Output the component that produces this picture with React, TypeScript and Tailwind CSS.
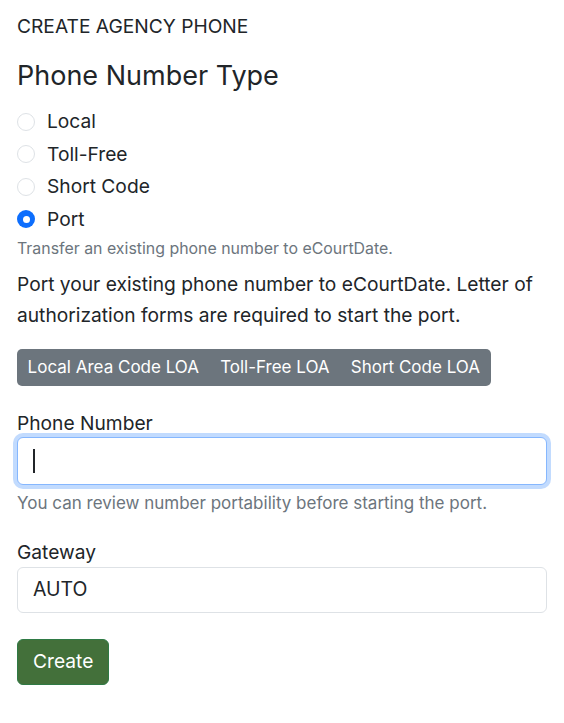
import React from "react";

const font = "[font-family:Inter,'Liberation_Sans',Arial,sans-serif]";

const phoneTypes = [
  { label: "Local", checked: false },
  { label: "Toll-Free", checked: false },
  { label: "Short Code", checked: false },
  { label: "Port", checked: true },
];

const loaForms = ["Local Area Code LOA", "Toll-Free LOA", "Short Code LOA"];

function Radio({ label, checked }: { label: string; checked: boolean }) {
  return (
    <label className="flex h-[32.5px] items-center gap-[12px]">
      {checked ? (
        <span className="flex h-[18px] w-[18px] items-center justify-center rounded-full bg-[#0d6efd]">
          <span className="h-[7px] w-[7px] rounded-full bg-white" />
        </span>
      ) : (
        <span className="h-[18px] w-[18px] rounded-full border border-[#dee2e6] bg-white" />
      )}
      <span className="text-[19.2px] leading-[27px]">{label}</span>
    </label>
  );
}

export default function App() {
  return (
    <div className={`min-h-[723px] bg-white px-[17px] pt-[13px] text-[#212529] ${font}`}>
      <div className="text-[19.2px] uppercase leading-[27px]">Create Agency Phone</div>

      <h2 className="mt-[19px] text-[27px] leading-[34px]">Phone Number Type</h2>

      <div className="mt-[12.5px]">
        {phoneTypes.map((t) => (
          <Radio key={t.label} label={t.label} checked={t.checked} />
        ))}
      </div>

      <div className="mt-[1px] text-[15.9px] leading-[24px] text-[#6c757d]">
        Transfer an existing phone number to eCourtDate.
      </div>

      <p className="mt-[8px] text-[19.2px] leading-[31px]">
        Port your existing phone number to eCourtDate. Letter of authorization forms are
        required to start the port.
      </p>

      <div className="mt-[18px] inline-flex h-[37px] overflow-hidden rounded-[5px] bg-[#6c757d]">
        {loaForms.map((f) => (
          <button
            key={f}
            type="button"
            className="px-[10.6px] text-[17px] leading-[37px] text-white"
          >
            {f}
          </button>
        ))}
      </div>

      <div className="mt-[24px] text-[19.2px] leading-[27px]">Phone Number</div>
      <div className="flex h-[48px] items-center rounded-[6px] border border-[#86b7fe] bg-white px-[15px] shadow-[0_0_0_4px_rgba(13,110,253,0.25)]">
        <span className="h-[24px] w-[1.5px] bg-[#212529]" />
      </div>
      <div className="mt-[6px] text-[17px] leading-[24px] text-[#6c757d]">
        You can review number portability before starting the port.
      </div>

      <div className="mt-[24px] text-[19.2px] leading-[27px]">Gateway</div>
      <div className="mt-[1px] flex h-[46px] items-center rounded-[6px] border border-[#dee2e6] bg-white px-[15px] text-[19.5px]">
        AUTO
      </div>

      <button
        type="button"
        className="mt-[26px] h-[46px] rounded-[6px] border border-[#2f7a45] bg-[#43703a] px-[15px] text-[19.2px] text-white"
      >
        Create
      </button>
    </div>
  );
}
